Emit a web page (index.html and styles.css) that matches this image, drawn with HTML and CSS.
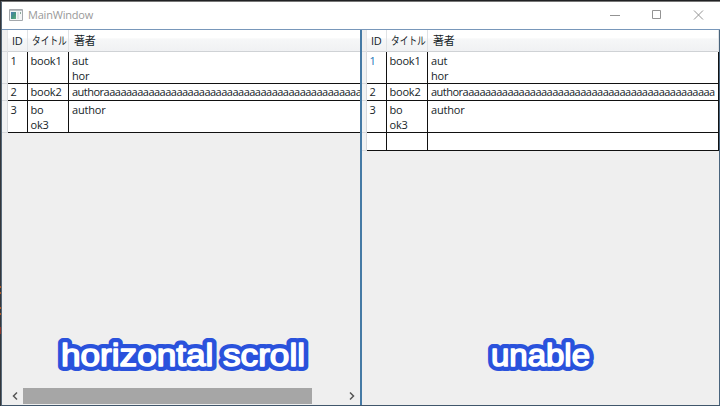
FILE: index.html
```
<!DOCTYPE html>
<html lang="ja">
<head>
<meta charset="utf-8">
<title>MainWindow</title>
<link rel="stylesheet" href="styles.css">
</head>
<body>
<div class="desktop">
  <div class="backdrop"><i></i><i></i><i></i><i></i><i class="red"></i></div>
  <main class="window">
    <header class="titlebar">
      <svg class="app-icon" width="14" height="12" viewBox="0 0 14 12">
        <defs><linearGradient id="g" x2="1" y2="1"><stop stop-color="#4c7bb5"/><stop offset=".6" stop-color="#46987c"/><stop offset="1" stop-color="#65ae83"/></linearGradient></defs>
        <path fill="#f4f5f6" stroke="#a4a8ac" d="M.5.5h13v11H.5z"/>
        <path fill="#b9bdc1" d="M1 1h12v1H1z"/>
        <path fill="url(#g)" d="M2 3h5v7H2z"/>
        <path fill="#dce0e2" d="M8 3h2v7H8z"/>
        <path fill="#8aa99a" d="M11 3h1v2h-1z"/>
      </svg>
      <h1>MainWindow</h1>
      <svg class="controls" width="94" height="10" viewBox="0 0 94 10" fill="none" stroke="#939393">
        <path d="M0 5.500h10M42.500.5h8v8h-8zM84 .5l9 9M93 .5l-9 9"/>
      </svg>
    </header>
    <div class="panes">
      <section class="pane left">
        <div class="table">
          <div class="row head"><span class="grip"></span><span>ID</span><span><b>タイトル</b></span><span>著者</span></div>
          <div class="row tall"><span class="grip"></span><span>1</span><span>book1</span><span>aut<br>hor</span></div>
          <div class="row"><span class="grip"></span><span>2</span><span>book2</span><span class="long">authoraaaaaaaaaaaaaaaaaaaaaaaaaaaaaaaaaaaaaaaaaaaaaa</span></div>
          <div class="row tall"><span class="grip"></span><span>3</span><span>bo<br>ok3</span><span>author</span></div>
        </div>
        <svg class="caption" width="270" height="48">
          <defs><text id="scroll" x="15" y="31" textLength="244" lengthAdjust="spacingAndGlyphs">horizontal scroll</text></defs>
          <use class="outline" href="#scroll"/><use href="#scroll"/>
        </svg>
        <div class="scrollbar">
          <svg width="8" height="10" viewBox="0 0 8 10"><path d="M6 1.500L2.500 5L6 8.500"/></svg>
          <div class="thumb"></div>
          <svg class="next" width="8" height="10" viewBox="0 0 8 10"><path d="M2 1.500L5.500 5L2 8.500"/></svg>
        </div>
      </section>
      <section class="pane right">
        <div class="table">
          <div class="row head"><span class="grip"></span><span>ID</span><span><b>タイトル</b></span><span>著者</span></div>
          <div class="row tall"><span class="grip"></span><span class="active">1</span><span>book1</span><span>aut<br>hor</span></div>
          <div class="row"><span class="grip"></span><span>2</span><span>book2</span><span class="long">authoraaaaaaaaaaaaaaaaaaaaaaaaaaaaaaaaaaaaaaaaaaaaa</span></div>
          <div class="row tall"><span class="grip"></span><span>3</span><span>bo<br>ok3</span><span>author</span></div>
          <div class="row blank"><span class="grip"></span><span></span><span></span><span></span></div>
        </div>
        <svg class="caption" width="120" height="48">
          <defs><text id="unable" x="10" y="31" textLength="99" lengthAdjust="spacingAndGlyphs">unable</text></defs>
          <use class="outline" href="#unable"/><use href="#unable"/>
        </svg>
      </section>
    </div>
  </main>
</div>
</body>
</html>
```
FILE: styles.css
```
* { box-sizing: border-box; }
body { margin: 0; overflow: hidden; font-family: "Open Sans", "Noto Sans CJK JP", sans-serif; }
.desktop { display: flex; width: 720px; height: 406px; padding-top: 1px; background: #202124; }
.backdrop { display: flex; flex-direction: column; width: 1px; padding-top: 285px; background: #34373b; }
.backdrop i { height: 2px; margin-bottom: 4px; background: #b45a24; }
.backdrop i:nth-child(2) { margin-bottom: 13px; }
.backdrop i.red { height: 7px; margin-top: 8px; background: #8e3528; }
.window { display: flex; flex-direction: column; width: 719px; height: 405px; background: #fff; border-left: 1px solid #566878; border-bottom: 1px solid #40566b; border-top: 1px solid #777; }
.titlebar { display: flex; align-items: center; height: 27px; padding: 0 16px 0 7px; }
.app-icon { margin-top: -2px; }
h1 { margin: -2px auto 0 5px; font-size: 11px; font-weight: 400; line-height: 20px; letter-spacing: -.2px; color: #999; }
.controls { margin-top: -1px; }
.panes { display: flex; flex: 1; min-height: 0; border-top: 1px solid #7897ba; }
.pane { display: flex; flex-direction: column; min-width: 0; background: #efefef; overflow: hidden; }
.left { width: 358px; }
.right { width: 360px; border-left: 2px solid #457aa5; border-right: 1px solid #49647d; }
.table { overflow: hidden; }
.row { display: grid; grid-template-columns: 6px 20px 41px minmax(0, 1fr); height: 17px; color: #151d28; font-size: 11px; line-height: 14.500px; letter-spacing: -.2px; }
.right .row { grid-template-columns: 5px 20px 41px minmax(0, 1fr); }
.row span { min-width: 0; padding: 1px 0 0 2.500px; background: #fff; border-right: 1px solid #111; border-bottom: 1px solid #111; white-space: nowrap; overflow: hidden; }
.row span:last-child { padding-left: 3px; }
.row .long { letter-spacing: -.51px; }
.left .row span:last-child { border-right: 0; }
.row .grip { padding: 0; background: #f1f2f3; border-right: 1px solid #d8dadd; border-bottom-color: #d8dadd; }
.row .active { color: #1674b8; }
.row.tall { height: 32px; }
.tall span { padding-top: 2px; }
.row.blank { height: 18px; }
.row.head { height: 22px; line-height: 20px; }
.head span { padding-left: 4px; background: linear-gradient(#fff 0 38%, #f6f7f8 42%, #f0f1f3); border-right-color: #dfe2e5; border-bottom-color: #cfd2d5; }
.head b { display: inline-block; font-weight: 400; letter-spacing: 0; transform: scaleX(.79); transform-origin: left; }
.head span:last-child { padding-left: 5px; }
.head .grip { border-right-color: #e5e6e8; background: #efefef; }
.caption { align-self: center; margin-top: auto; font: 400 32px "Liberation Sans", sans-serif; fill: #fff; stroke: #fff; stroke-width: 1.500px; stroke-linejoin: round; }
.outline { stroke: #2a52dc; stroke-width: 10px; }
.left .caption { margin-bottom: 4px; }
.right .caption { margin-bottom: 22px; }
.scrollbar { display: flex; align-items: center; height: 18px; padding: 0 4px 1px 9px; background: #efefef; }
.scrollbar path { fill: none; stroke: #555; stroke-width: 1.500px; }
.thumb { width: 289px; height: 16px; margin: 0 auto 0 4px; background: #a6a6a6; }
```
